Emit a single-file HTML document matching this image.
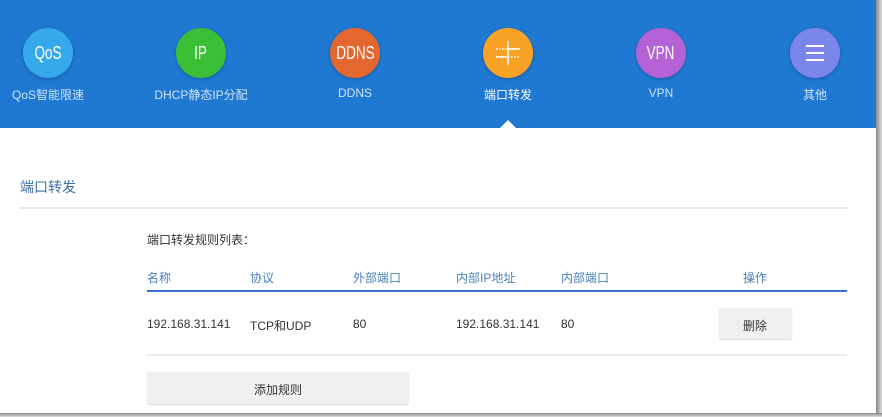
<!DOCTYPE html>
<html><head><meta charset="utf-8"><style>
body{margin:0;width:882px;height:417px;overflow:hidden;background:#fff;font-family:"Liberation Sans","Noto Sans CJK SC",sans-serif;position:relative}
.hdr{position:absolute;left:0;top:0;width:876px;height:128px;background:#1f78d1}
.edge{position:absolute;left:876px;top:0;width:6px;height:417px;background:linear-gradient(to right,#888,#ddd)}
.bedge{position:absolute;left:0;top:413px;width:882px;height:4px;background:linear-gradient(#888,#ddd)}
.ic{position:absolute;top:28px;width:50px;height:50px;border-radius:50%;color:#fff;font-size:18px;text-align:center;line-height:50px;box-shadow:0 1px 3px rgba(0,0,0,.25)}
.ic span{display:inline-block;transform:scaleX(.75)}
.lb{position:absolute;top:86px;width:140px;text-align:center;color:#cfe3f7;font-size:12px}
.t{position:absolute;font-size:12px;color:#333;white-space:nowrap}
.h{color:#4a7fb8}
</style></head><body>
<div class="hdr"></div>
<div class="ic" style="left:23px;background:#35a9ec"><span>QoS</span></div>
<div class="ic" style="left:176px;background:#3bbf36"><span>IP</span></div>
<div class="ic" style="left:330px;background:#e3672e"><span>DDNS</span></div>
<div class="ic" style="left:483px;background:#f8a326"><svg width="50" height="50" style="display:block"><g stroke="#fff" stroke-width="1.5" fill="none"><line x1="25" y1="13" x2="25" y2="37"/><line x1="13" y1="21" x2="37" y2="21" stroke-dasharray="1.5 1.5"/><line x1="13" y1="29" x2="37" y2="29" stroke-dasharray="1.5 1.5"/><line x1="26" y1="21" x2="37" y2="21"/><line x1="13" y1="29" x2="24" y2="29"/></g></svg></div>
<div class="ic" style="left:636px;background:#b462d6"><span>VPN</span></div>
<div class="ic" style="left:790px;background:#7b86ea"><svg width="50" height="50" style="display:block"><g stroke="#fff" stroke-width="2"><line x1="16" y1="18" x2="34" y2="18"/><line x1="16" y1="25" x2="34" y2="25"/><line x1="16" y1="32" x2="34" y2="32"/></g></svg></div>
<div class="lb" style="left:-22px">QoS智能限速</div>
<div class="lb" style="left:131px">DHCP静态IP分配</div>
<div class="lb" style="left:285px">DDNS</div>
<div class="lb" style="left:438px;color:#fff">端口转发</div>
<div class="lb" style="left:591px">VPN</div>
<div class="lb" style="left:745px">其他</div>
<div style="position:absolute;left:500px;top:120px;border-left:8px solid transparent;border-right:8px solid transparent;border-bottom:8px solid #fff;width:0;height:0"></div>
<div class="t" style="left:20px;top:177px;font-size:14px;color:#3f6fa8">端口转发</div>
<div style="position:absolute;left:20px;top:207px;width:827px;height:2px;background:#e6e6e6"></div>
<div class="t" style="left:147px;top:231px">端口转发规则列表：</div>
<div class="t h" style="left:147px;top:269px">名称</div>
<div class="t h" style="left:250px;top:269px">协议</div>
<div class="t h" style="left:353px;top:269px">外部端口</div>
<div class="t h" style="left:456px;top:269px">内部IP地址</div>
<div class="t h" style="left:561px;top:269px">内部端口</div>
<div class="t h" style="left:743px;top:269px">操作</div>
<div style="position:absolute;left:147px;top:290px;width:700px;height:2px;background:#3b6fd0"></div>
<div class="t" style="left:147px;top:317px">192.168.31.141</div>
<div class="t" style="left:250px;top:317px">TCP和UDP</div>
<div class="t" style="left:353px;top:317px">80</div>
<div class="t" style="left:456px;top:317px">192.168.31.141</div>
<div class="t" style="left:561px;top:317px">80</div>
<div style="position:absolute;left:719px;top:308px;width:73px;height:31px;background:#f0f0f0;border-radius:2px;box-shadow:0 1px 1px #ddd"></div>
<div class="t" style="left:743px;top:317px">删除</div>
<div style="position:absolute;left:147px;top:354px;width:700px;height:2px;background:#ececec"></div>
<div style="position:absolute;left:147px;top:372px;width:262px;height:32px;background:#f0f0f0;border-radius:2px;box-shadow:0 1px 1px #ddd"></div>
<div class="t" style="left:254px;top:381px">添加规则</div>
<div class="edge"></div><div class="bedge"></div>
</body></html>
